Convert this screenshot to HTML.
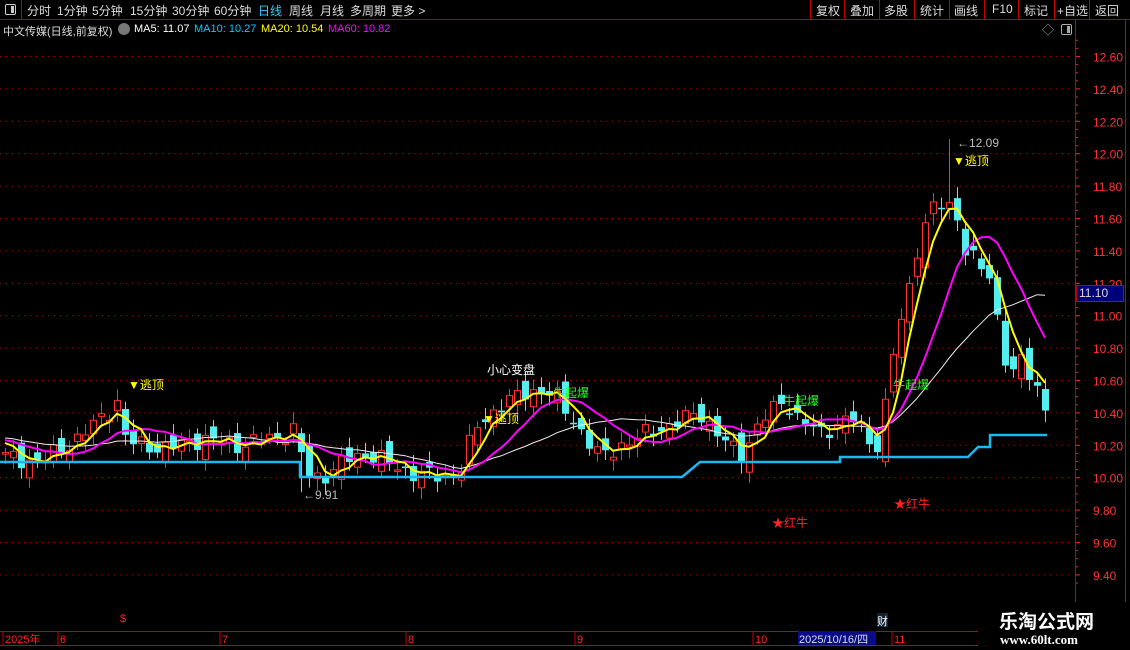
<!DOCTYPE html>
<html><head><meta charset="utf-8"><style>
body{margin:0;background:#000;width:1130px;height:650px;overflow:hidden;font-family:"Liberation Sans","Noto Sans CJK SC",sans-serif;position:relative}
.tb{position:absolute;top:0;left:0;width:1130px;height:19px;border-bottom:1px solid #c00000}
.tb span{position:absolute;top:2px;font-size:12px;color:#ddd}
.sep{position:absolute;top:0;width:1px;height:19px;background:#c00000}
.t{position:absolute;font-size:12px;white-space:nowrap}
</style></head><body>
<div class="tb">
<div style="position:absolute;left:0;top:0;width:21px;height:19px;border-right:1px solid #c00000"></div>
<div style="position:absolute;left:5px;top:4px;width:9px;height:9px;border:1px solid #ccc;border-radius:2px"><div style="position:absolute;right:1px;top:1px;width:3px;height:7px;background:#ccc"></div></div>
<span style="left:27px">分时</span><span style="left:57px">1分钟</span><span style="left:92px">5分钟</span><span style="left:130px">15分钟</span><span style="left:172px">30分钟</span><span style="left:214px">60分钟</span><span style="left:258px;color:#3cf">日线</span><span style="left:289px">周线</span><span style="left:320px">月线</span><span style="left:350px">多周期</span><span style="left:391px">更多 &gt;</span>
<div class="sep" style="left:810px"></div><span style="left:816px">复权</span>
<div class="sep" style="left:844px"></div><span style="left:850px">叠加</span>
<div class="sep" style="left:879px"></div><span style="left:884px">多股</span>
<div class="sep" style="left:914px"></div><span style="left:920px">统计</span>
<div class="sep" style="left:949px"></div><span style="left:954px">画线</span>
<div class="sep" style="left:984px"></div><span style="left:992px">F10</span>
<div class="sep" style="left:1018px"></div><span style="left:1024px">标记</span>
<div class="sep" style="left:1054px"></div><span style="left:1057px">+自选</span>
<div class="sep" style="left:1089px"></div><span style="left:1095px">返回</span>
</div>
<div class="t" style="left:3px;top:23px;color:#ddd;font-size:11px">中文传媒(日线,前复权)</div>
<div style="position:absolute;left:118px;top:23px;width:12px;height:12px;border-radius:50%;background:#777"></div>
<div class="t" style="left:134px;top:23px;color:#fff;font-size:11px">MA5: 11.07</div>
<div class="t" style="left:194px;top:23px;color:#0cf;font-size:11px">MA10: 10.27</div>
<div class="t" style="left:261px;top:23px;color:#ff0;font-size:11px">MA20: 10.54</div>
<div class="t" style="left:328px;top:23px;color:#f0f;font-size:11px">MA60: 10.82</div>
<div class="t" style="left:1042px;top:21px;color:#aaa">◇</div>
<div style="position:absolute;left:1061px;top:24px;width:9px;height:9px;border:1px solid #aaa;border-radius:2px"><div style="position:absolute;right:1px;top:1px;width:3px;height:7px;background:#aaa"></div></div>
<svg id="s" width="1130" height="650" style="position:absolute;left:0;top:0"></svg>
<div class="t" style="left:128px;top:376px;color:#ff0">▼逃顶</div>
<div class="t" style="left:483px;top:410px;color:#ff0">▼逃顶</div>
<div class="t" style="left:953px;top:152px;color:#ff0">▼逃顶</div>
<div class="t" style="left:487px;top:361px;color:#fff">小心变盘</div>
<div class="t" style="left:553px;top:384px;color:#2f2">牛起爆</div>
<div class="t" style="left:783px;top:392px;color:#2f2">牛起爆</div>
<div class="t" style="left:893px;top:376px;color:#2f2">牛起爆</div>
<div class="t" style="left:772px;top:514px;color:#f22">★红牛</div>
<div class="t" style="left:894px;top:495px;color:#f22">★红牛</div>
<div class="t" style="left:303px;top:488px;color:#bbb">←9.91</div>
<div class="t" style="left:957px;top:136px;color:#bbb">←12.09</div>
<div class="t" style="left:120px;top:613px;color:#f22;font-size:11px">$</div>
<div style="position:absolute;left:877px;top:613px;width:11px;height:14px;background:#123;color:#fff;font-size:11px">财</div>
<div class="t" style="left:1076px;top:285px;width:44px;height:15px;background:#00007a;color:#ddd;border:1px solid #c00000;padding-left:2px">11.10</div>
<div style="position:absolute;left:798px;top:631px;width:78px;height:14px;background:#0a0a8a"></div>
<div class="t" style="left:799px;top:631px;color:#ddd;font-size:11px">2025/10/16/四</div>
<div style="position:absolute;left:978px;top:602px;width:152px;height:48px;background:#000"></div>
<div class="t" style="left:999px;top:607px;color:#fff;font-size:19px;font-weight:bold">乐淘公式网</div>
<div class="t" style="left:1000px;top:632px;color:#fff;font-size:13px;font-weight:bold;font-family:'Liberation Serif',serif">www.60lt.com</div>
<script>
var s=document.getElementById('s'),h='';
function Y(p){return 56.5+(12.6-p)*162}
for(var p=12.6;p>9.35;p-=0.2){var y=Y(p).toFixed(1);h+='<line x1="0" x2="1072" y1="'+y+'" y2="'+y+'" stroke="#a00" stroke-dasharray="1,5"/>';
h+='<line x1="1075" x2="1080" y1="'+y+'" y2="'+y+'" stroke="#e22"/><text x="1093" y="'+(+y+5)+'" fill="#f33" font-size="12" font-family="Liberation Sans">'+p.toFixed(2)+'</text>';}
for(var p=12.7;p>9.3;p-=0.05){var y=Y(p);h+='<line x1="1075" x2="1078" y1="'+y+'" y2="'+y+'" stroke="#e22"/>';}
h+='<line x1="1075.5" x2="1075.5" y1="20" y2="631" stroke="#c00"/><line x1="1125.5" x2="1125.5" y1="20" y2="631" stroke="#c00"/>';
h+='<line x1="0" x2="978" y1="631.5" y2="631.5" stroke="#c00"/><line x1="0" x2="978" y1="645.5" y2="645.5" stroke="#c00"/>';
var dl=[[5,'2025年'],[60,'6'],[222,'7'],[408,'8'],[577,'9'],[755,'10'],[894,'11']];
dl.forEach(function(d){h+='<line x1="'+(d[0]-2)+'" x2="'+(d[0]-2)+'" y1="631" y2="645" stroke="#c00"/><text x="'+d[0]+'" y="643" fill="#f22" font-size="11" font-family="Liberation Sans">'+d[1]+'</text>'});
var K=[[5,10.13],[40,10.1],[80,10.25],[118,10.47],[126,10.22],[165,10.18],[200,10.24],[240,10.2],[280,10.26],[296,10.3],[305,10.02],[320,10.0],[350,10.12],[370,10.15],[400,10.05],[440,10.0],[460,10.05],[475,10.3],[500,10.45],[525,10.52],[545,10.55],[560,10.45],[580,10.3],[600,10.12],[620,10.2],[650,10.28],[680,10.35],[700,10.4],[720,10.25],[740,10.13],[760,10.35],[785,10.48],[800,10.35],[820,10.27],[850,10.38],[870,10.22],[880,10.2],[890,10.7],[905,11.05],[918,11.45],[932,11.68],[948,11.66],[958,11.62],[966,11.38],[976,11.35],[990,11.2],[1002,10.85],[1010,10.6],[1020,10.75],[1030,10.6],[1045,10.46]];
function interp(x){for(var i=1;i<K.length;i++)if(x<=K[i][0]){var a=K[i-1],b=K[i];return a[1]+(b[1]-a[1])*(x-a[0])/(b[0]-a[0])}return K[K.length-1][1]}
var C=[],n=131;for(var i=0;i<n;i++){C.push(interp(5+i*8)+0.04*Math.sin(i*2.3)+0.025*Math.cos(i*5.1))}
var pre=[];for(var i=0;i<60;i++)pre.push(10.35-0.002*i);var all=pre.concat(C);
function ma(k){var r=[];for(var i=0;i<n;i++){var s2=0;for(var j=0;j<k;j++)s2+=all[60+i-j];r.push(s2/k)}return r}
function line(a,c,w){var d='';a.forEach(function(v,i){d+=(i?'L':'M')+(5+i*8)+' '+Y(v).toFixed(1)});h+='<path d="'+d+'" fill="none" stroke="'+c+'" stroke-width="'+w+'"/>'}
for(var i=0;i<n;i++){var x=5+i*8,c=C[i],o=i?C[i-1]+0.06*Math.sin(i*3.7):c;var up=c>=o;var hi=Math.max(o,c)+0.03+0.04*Math.abs(Math.sin(i*1.7)),lo=Math.min(o,c)-0.03-0.04*Math.abs(Math.cos(i*2.9));
if(i==118)hi=12.09;if(i==37)lo=9.91;
var col=up?'#ff3030':'#55eeee';var y1=Y(Math.max(o,c)),y2=Y(Math.min(o,c));if(y2-y1<1.5)y2=y1+1.5;
h+='<line x1="'+(x+0.5)+'" x2="'+(x+0.5)+'" y1="'+Y(hi)+'" y2="'+Y(lo)+'" stroke="'+col+'"/>';
h+=up?'<rect x="'+(x-2.5)+'" y="'+y1+'" width="6" height="'+(y2-y1)+'" fill="#000" stroke="'+col+'"/>':'<rect x="'+(x-3)+'" y="'+y1+'" width="7" height="'+(y2-y1)+'" fill="'+col+'"/>';}
line(ma(20),'#eee',1);line(ma(10),'#f0f',2);line(ma(4),'#ff0',2);
h+='<path d="M0 462H300V477H682L700 462H840V457H968L978 447H990V435H1047" fill="none" stroke="#1ab8f0" stroke-width="2.5"/>';
s.innerHTML=h;
</script>
</body></html>
